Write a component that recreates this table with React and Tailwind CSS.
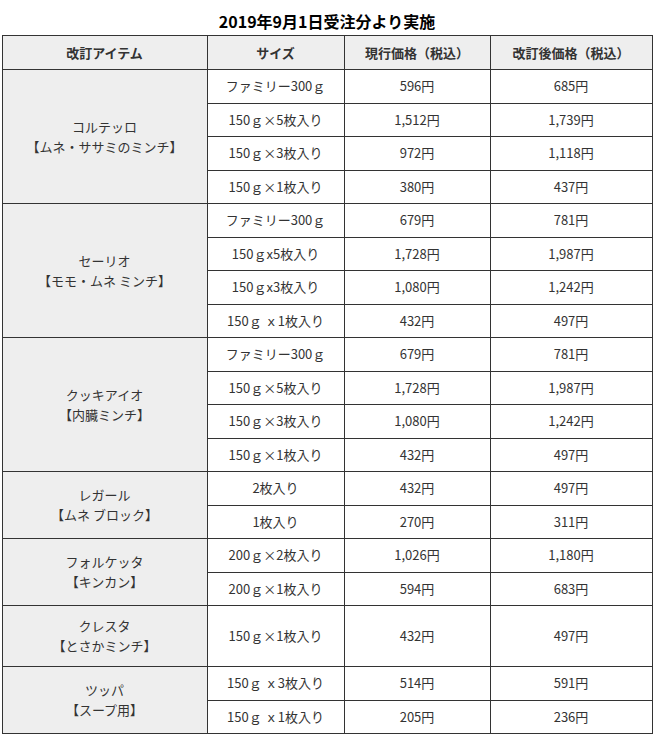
import React from "react";

const groups = [
  {
    name: "コルテッロ",
    sub: "【ムネ・ササミのミンチ】",
    rows: [
      ["ファミリー300ｇ", "596円", "685円"],
      ["150ｇ×5枚入り", "1,512円", "1,739円"],
      ["150ｇ×3枚入り", "972円", "1,118円"],
      ["150ｇ×1枚入り", "380円", "437円"],
    ],
  },
  {
    name: "セーリオ",
    sub: "【モモ・ムネ ミンチ】",
    rows: [
      ["ファミリー300ｇ", "679円", "781円"],
      ["150ｇx5枚入り", "1,728円", "1,987円"],
      ["150ｇx3枚入り", "1,080円", "1,242円"],
      ["150ｇ ｘ1枚入り", "432円", "497円"],
    ],
  },
  {
    name: "クッキアイオ",
    sub: "【内臓ミンチ】",
    rows: [
      ["ファミリー300ｇ", "679円", "781円"],
      ["150ｇ×5枚入り", "1,728円", "1,987円"],
      ["150ｇ×3枚入り", "1,080円", "1,242円"],
      ["150ｇ×1枚入り", "432円", "497円"],
    ],
  },
  {
    name: "レガール",
    sub: "【ムネ ブロック】",
    rows: [
      ["2枚入り", "432円", "497円"],
      ["1枚入り", "270円", "311円"],
    ],
  },
  {
    name: "フォルケッタ",
    sub: "【キンカン】",
    rows: [
      ["200ｇ×2枚入り", "1,026円", "1,180円"],
      ["200ｇ×1枚入り", "594円", "683円"],
    ],
  },
  {
    name: "クレスタ",
    sub: "【とさかミンチ】",
    tall: true,
    rows: [["150ｇ×1枚入り", "432円", "497円"]],
  },
  {
    name: "ツッパ",
    sub: "【スープ用】",
    rows: [
      ["150ｇ ｘ3枚入り", "514円", "591円"],
      ["150ｇ ｘ1枚入り", "205円", "236円"],
    ],
  },
];

const cell = "border border-[#333] text-center align-middle px-1";

export default function App() {
  return (
    <div className="w-[654px] bg-white text-[#333] font-['Meiryo','Noto_Sans_CJK_JP',sans-serif] text-[13px] leading-[20px]">
      <div className="h-[35px] pt-[10px] text-center text-[16px] leading-[22px] font-bold text-black">
        2019年9月1日受注分より実施
      </div>
      <table className="mx-auto w-[650px] border-collapse table-fixed">
        <colgroup>
          <col className="w-[205px]" />
          <col className="w-[137px]" />
          <col className="w-[146px]" />
          <col className="w-[162px]" />
        </colgroup>
        <thead>
          <tr className="h-[34px] bg-[#eeeeee] font-bold">
            <th className={cell}>改訂アイテム</th>
            <th className={cell}>サイズ</th>
            <th className={cell}>現行価格（税込）</th>
            <th className={cell}>改訂後価格（税込）</th>
          </tr>
        </thead>
        <tbody>
          {groups.map((g) =>
            g.rows.map((r, i) => (
              <tr key={g.name + i} className={g.tall ? "h-[61px]" : "h-[33.5px]"}>
                {i === 0 && (
                  <td rowSpan={g.rows.length} className={`${cell} bg-[#eeeeee]`}>
                    {g.name}
                    <br />
                    {g.sub}
                  </td>
                )}
                <td className={`${cell} whitespace-nowrap`}>{r[0]}</td>
                <td className={cell}>{r[1]}</td>
                <td className={cell}>{r[2]}</td>
              </tr>
            ))
          )}
        </tbody>
      </table>
    </div>
  );
}
